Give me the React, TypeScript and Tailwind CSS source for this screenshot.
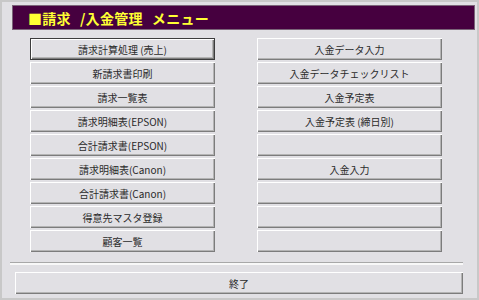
import React from "react";

const left = [
  "請求計算処理 (売上)",
  "新請求書印刷",
  "請求一覧表",
  "請求明細表(EPSON)",
  "合計請求書(EPSON)",
  "請求明細表(Canon)",
  "合計請求書(Canon)",
  "得意先マスタ登録",
  "顧客一覧",
];

const right = [
  "入金データ入力",
  "入金データチェックリスト",
  "入金予定表",
  "入金予定表 (締日別)",
  "",
  "入金入力",
  "",
  "",
  "",
];

function Btn({ label, focused }: { label: string; focused?: boolean }) {
  if (focused) {
    return (
      <div className="h-[22px] border border-[#3c3c3c] bg-[#e1e0e4]">
        <div className="h-full flex items-center justify-center shadow-[inset_1px_1px_#ffffff,inset_-1px_-1px_#7c7c7c,inset_-2px_-2px_#b4b4b4] text-[10px] text-[#2a2a2a]">
          {label}
        </div>
      </div>
    );
  }
  return (
    <div className="h-[22px] flex items-center justify-center bg-[#e1e0e4] shadow-[inset_1px_1px_#ffffff,inset_-1px_-1px_#7c7c7c,inset_-2px_-2px_#b4b4b4] text-[10px] text-[#2a2a2a]">
      {label}
    </div>
  );
}

export default function App() {
  return (
    <div
      className="w-[479px] h-[300px] border-2 border-[#c8c8c8] bg-[#e1e0e4] flex flex-col overflow-hidden"
      style={{ fontFamily: '"Noto Sans CJK JP", "Noto Sans", sans-serif' }}
    >
      <div className="mt-[3px] ml-[10px] mr-[2px] h-[25px] bg-[#46003f] border border-[#7a6478] flex items-center pl-[15px] pt-[1px]">
        <span className="text-[14px] font-bold text-[#ffff33] leading-none tracking-[0.3px] flex items-center">
          <span>■請求</span>
          <span className="ml-[9px]">/入金管理</span>
          <span className="ml-[9px]">メニュー</span>
        </span>
      </div>
      <div className="mt-[8px] ml-[28px] grid grid-cols-[185px_185px] gap-x-[42px]">
        <div className="flex flex-col gap-[2px]">
          {left.map((l, i) => (
            <Btn key={i} label={l} focused={i === 0} />
          ))}
        </div>
        <div className="flex flex-col gap-[2px]">
          {right.map((l, i) => (
            <Btn key={i} label={l} />
          ))}
        </div>
      </div>
      <div className="mt-[10px] ml-[8px] mr-[14px] h-[1px] bg-[#a8a8a8]" />
      <div className="ml-[8px] mr-[14px] h-[2px] bg-[#f8f8f8]" />
      <div className="mt-[7px] ml-[13px] mr-[14px]">
        <div className="h-[22px] flex items-center justify-center bg-[#e1e0e4] shadow-[inset_1px_1px_#ffffff,inset_-1px_-1px_#7c7c7c,inset_-2px_-2px_#b4b4b4] text-[10px] text-[#2a2a2a]">
          終了
        </div>
      </div>
    </div>
  );
}
